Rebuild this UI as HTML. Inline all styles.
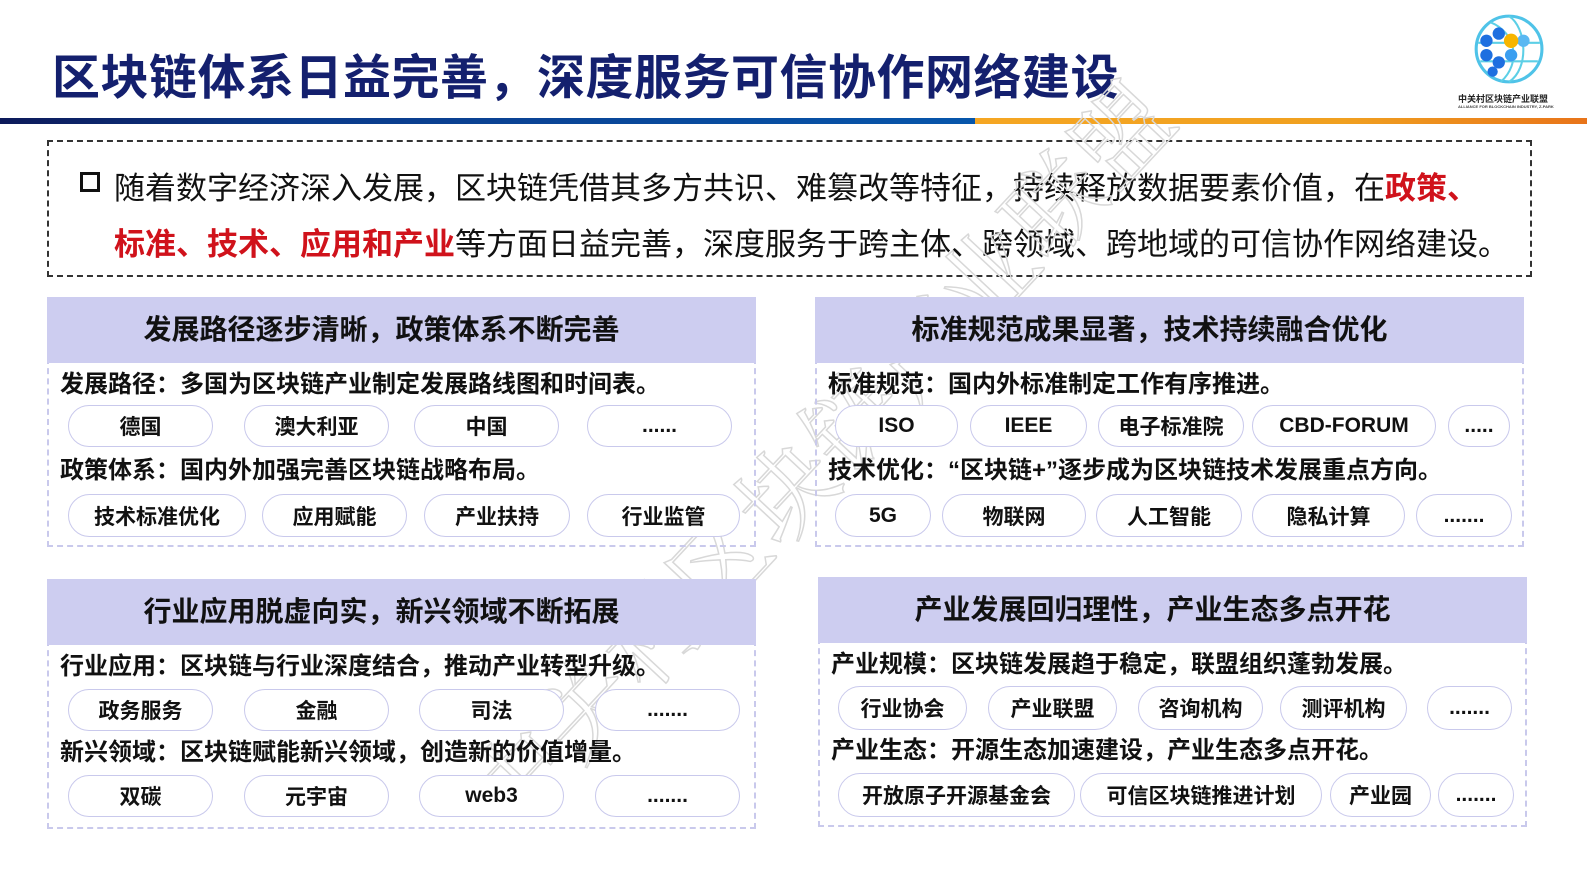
<!DOCTYPE html>
<html><head><meta charset="utf-8"><style>
*{margin:0;padding:0;box-sizing:border-box}
body{width:1587px;height:893px;background:#fff;position:relative;overflow:hidden;font-family:"Liberation Sans","Noto Sans CJK SC",sans-serif;font-weight:bold;color:#111}
.a{position:absolute}
.title{left:52px;top:38px;font-size:48px;color:#14206e;letter-spacing:0.5px;white-space:nowrap}
.line1{left:0;top:118px;width:975px;height:6px;background:linear-gradient(90deg,#0d1a5a,#0b3a8a 30%,#0756ab)}
.line2{left:975px;top:118px;width:612px;height:6px;background:linear-gradient(90deg,#f5a623,#f0a020 60%,#e8741a)}
.dash{left:47px;top:140px;width:1485px;height:137px;border:2px dashed #333}
.intro{font-size:31px;font-weight:normal;white-space:nowrap;color:#111}
.red{color:#d0121b;font-weight:bold}
.sq{left:80px;top:172px;width:20px;height:20px;border:3px solid #111}
.panel{border:2px dashed #c9c9ec;border-top:none}
.hd{background:#cdcdf0;font-size:28px;text-align:center;color:#111;position:absolute;padding-right:40px}
.ln{font-size:24px;white-space:nowrap;position:absolute;line-height:28px}
.p{position:absolute;border:1.5px solid #c9c9ec;border-radius:22px;font-size:21px;display:flex;align-items:center;justify-content:center;background:#fff}
.wm{left:330px;top:390px;font-size:96px;color:transparent;-webkit-text-stroke:1.5px #d8d8d8;transform:rotate(-47deg);white-space:nowrap;font-family:"Noto Serif CJK SC",serif;font-weight:normal;transform-origin:center;letter-spacing:2px;width:960px}
</style></head><body>
<div class="a title">区块链体系日益完善，深度服务可信协作网络建设</div>
<div class="a line1"></div><div class="a line2"></div>
<svg class="a" style="left:1470px;top:12px" width="74" height="74" viewBox="0 0 72 72">
<circle cx="38" cy="36" r="32" fill="none" stroke="#4fc3e8" stroke-width="3"/>
<path d="M38 4 C55 15 58 55 38 68 M20 10 C45 20 50 50 30 68 M8 30 H68 M10 48 H66" fill="none" stroke="#5ccfe6" stroke-width="2"/>
<g fill="#1e6fe0"><circle cx="16" cy="28" r="6"/><circle cx="16" cy="42" r="6"/><circle cx="28" cy="21" r="6"/><circle cx="28" cy="49" r="6"/><circle cx="40" cy="42" r="6" fill="#3b9ef0"/><circle cx="52" cy="28" r="6" fill="#5ab8f2"/><circle cx="22" cy="58" r="5"/></g>
<circle cx="40" cy="28" r="7" fill="#f7b500"/>
</svg>
<div class="a" style="left:1458px;top:92px;font-size:9px;color:#222;white-space:nowrap">中关村区块链产业联盟</div>
<div class="a" style="left:1458px;top:104px;font-size:4px;color:#444;white-space:nowrap">ALLIANCE FOR BLOCKCHAIN INDUSTRY, Z-PARK</div>

<div class="a dash"></div>
<div class="a sq"></div>
<div class="a intro" style="left:114px;top:163px">随着数字经济深入发展，区块链凭借其多方共识、难篡改等特征，持续释放数据要素价值，在<span class="red">政策、</span></div>
<div class="a intro" style="left:114px;top:219px"><span class="red">标准、技术、应用和产业</span>等方面日益完善，深度服务于跨主体、跨领域、跨地域的可信协作网络建设。</div>

<div class="a wm">中关村区块链产业联盟</div>

<div class="a panel" style="left:47px;top:297px;width:709px;height:250px"></div>
<div class="hd" style="left:47px;top:297px;width:709px;height:66px;line-height:66px">发展路径逐步清晰，政策体系不断完善</div>
<div class="ln" style="left:60px;top:371px">发展路径：多国为区块链产业制定发展路线图和时间表。</div>
<div class="p" style="left:68px;top:405px;width:145px;height:42px">德国</div>
<div class="p" style="left:244px;top:405px;width:145px;height:42px">澳大利亚</div>
<div class="p" style="left:414px;top:405px;width:145px;height:42px">中国</div>
<div class="p" style="left:587px;top:405px;width:145px;height:42px">......</div>
<div class="ln" style="left:60px;top:457px">政策体系：国内外加强完善区块链战略布局。</div>
<div class="p" style="left:68px;top:494px;width:178px;height:43px">技术标准优化</div>
<div class="p" style="left:262px;top:494px;width:145px;height:43px">应用赋能</div>
<div class="p" style="left:424px;top:494px;width:146px;height:43px">产业扶持</div>
<div class="p" style="left:587px;top:494px;width:153px;height:43px">行业监管</div>

<div class="a panel" style="left:815px;top:297px;width:709px;height:250px"></div>
<div class="hd" style="left:815px;top:297px;width:709px;height:66px;line-height:66px">标准规范成果显著，技术持续融合优化</div>
<div class="ln" style="left:828px;top:371px">标准规范：国内外标准制定工作有序推进。</div>
<div class="p" style="left:835px;top:405px;width:123px;height:42px">ISO</div>
<div class="p" style="left:970px;top:405px;width:117px;height:42px">IEEE</div>
<div class="p" style="left:1098px;top:405px;width:146px;height:42px">电子标准院</div>
<div class="p" style="left:1252px;top:405px;width:184px;height:42px">CBD-FORUM</div>
<div class="p" style="left:1448px;top:405px;width:62px;height:42px">.....</div>
<div class="ln" style="left:828px;top:457px">技术优化：“区块链+”逐步成为区块链技术发展重点方向。</div>
<div class="p" style="left:835px;top:494px;width:96px;height:43px">5G</div>
<div class="p" style="left:942px;top:494px;width:144px;height:43px">物联网</div>
<div class="p" style="left:1096px;top:494px;width:146px;height:43px">人工智能</div>
<div class="p" style="left:1252px;top:494px;width:153px;height:43px">隐私计算</div>
<div class="p" style="left:1416px;top:494px;width:96px;height:43px">.......</div>

<div class="a panel" style="left:47px;top:579px;width:709px;height:250px"></div>
<div class="hd" style="left:47px;top:579px;width:709px;height:66px;line-height:66px">行业应用脱虚向实，新兴领域不断拓展</div>
<div class="ln" style="left:60px;top:653px">行业应用：区块链与行业深度结合，推动产业转型升级。</div>
<div class="p" style="left:68px;top:689px;width:145px;height:42px">政务服务</div>
<div class="p" style="left:244px;top:689px;width:145px;height:42px">金融</div>
<div class="p" style="left:419px;top:689px;width:145px;height:42px">司法</div>
<div class="p" style="left:595px;top:689px;width:145px;height:42px">.......</div>
<div class="ln" style="left:60px;top:739px">新兴领域：区块链赋能新兴领域，创造新的价值增量。</div>
<div class="p" style="left:68px;top:775px;width:145px;height:42px">双碳</div>
<div class="p" style="left:244px;top:775px;width:145px;height:42px">元宇宙</div>
<div class="p" style="left:419px;top:775px;width:145px;height:42px">web3</div>
<div class="p" style="left:595px;top:775px;width:145px;height:42px">.......</div>

<div class="a panel" style="left:818px;top:577px;width:709px;height:250px"></div>
<div class="hd" style="left:818px;top:577px;width:709px;height:66px;line-height:66px">产业发展回归理性，产业生态多点开花</div>
<div class="ln" style="left:831px;top:651px">产业规模：区块链发展趋于稳定，联盟组织蓬勃发展。</div>
<div class="p" style="left:838px;top:686px;width:129px;height:44px">行业协会</div>
<div class="p" style="left:988px;top:686px;width:129px;height:44px">产业联盟</div>
<div class="p" style="left:1138px;top:686px;width:125px;height:44px">咨询机构</div>
<div class="p" style="left:1280px;top:686px;width:127px;height:44px">测评机构</div>
<div class="p" style="left:1427px;top:686px;width:85px;height:44px">.......</div>
<div class="ln" style="left:831px;top:737px">产业生态：开源生态加速建设，产业生态多点开花。</div>
<div class="p" style="left:838px;top:773px;width:237px;height:44px">开放原子开源基金会</div>
<div class="p" style="left:1080px;top:773px;width:242px;height:44px">可信区块链推进计划</div>
<div class="p" style="left:1330px;top:773px;width:101px;height:44px">产业园</div>
<div class="p" style="left:1438px;top:773px;width:76px;height:44px">.......</div>
</body></html>
